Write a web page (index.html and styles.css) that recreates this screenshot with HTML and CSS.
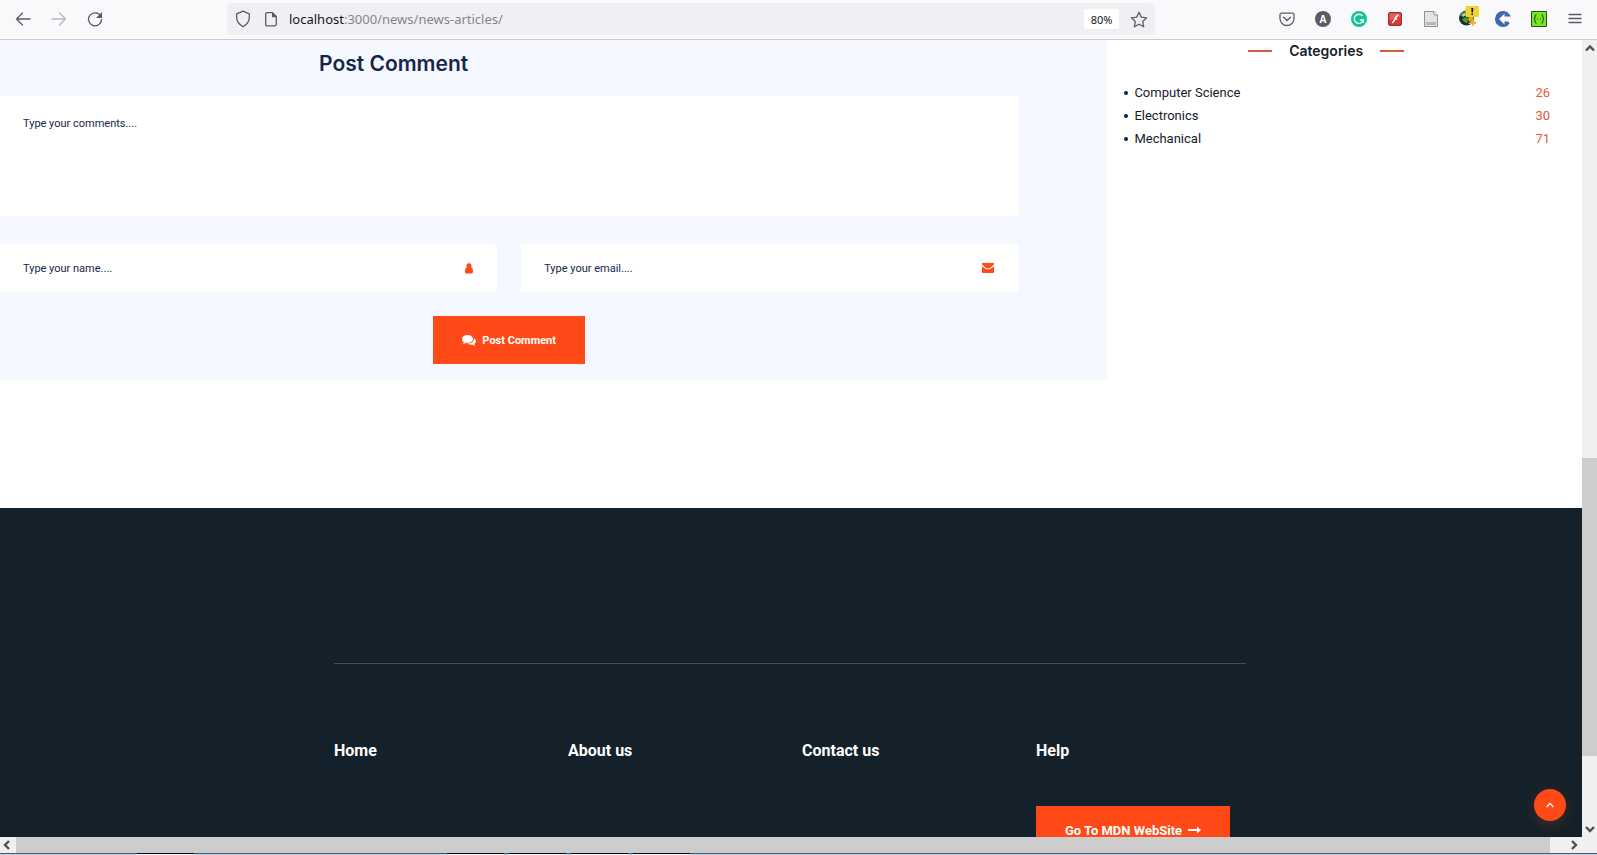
FILE: index.html
```html
<!DOCTYPE html>
<html lang="en">
<head>
<meta charset="utf-8">
<title>News articles</title>
<link rel="stylesheet" href="styles.css">
</head>
<body>
<header class="toolbar">
  <nav class="tools" aria-label="Navigation">
    <button class="tool" aria-label="Back"><svg width="16" height="16" viewBox="0 0 16 16"><path d="M15 8H1.500M7.500 2l-6 6 6 6" class="line"/></svg></button>
    <button class="tool faded" aria-label="Forward"><svg width="16" height="16" viewBox="0 0 16 16"><path d="M1 8h13.500M8.500 2l6 6-6 6" class="line"/></svg></button>
    <button class="tool" aria-label="Reload"><svg width="16" height="16" viewBox="0 0 16 16"><path d="M13.600 5A6.500 6.500 0 1 0 14.500 8.500" class="line"/><path d="M15 1v6H9z" fill="#5b5b66"/></svg></button>
  </nav>
  <div class="urlbar">
    <svg width="16" height="18" viewBox="0 0 16 18"><path d="M8 1.200 14.300 3.800v3.700c0 4.500-2.800 7.300-6.300 9.300-3.500-2-6.300-4.800-6.300-9.300V3.800z" class="line"/></svg>
    <svg class="page-icon" width="12" height="16" viewBox="0 0 12 16"><path d="M2 1.700h5.500l3.800 3.800v7.800a1.500 1.500 0 0 1-1.500 1.500H2A1.300 1.300 0 0 1 .700 13.500V3A1.300 1.300 0 0 1 2 1.700z" class="line"/><path d="M7 1.200v5h5z" fill="#5b5b66"/></svg>
    <span class="address"><b>localhost</b>:3000/news/news-articles/</span>
    <button class="zoom">80%</button>
    <button class="star" aria-label="Bookmark"><svg width="18" height="17" viewBox="0 0 18 17"><path d="m9 1.200 2.300 4.900 5.300.7-3.900 3.700 1 5.300L9 13.200l-4.700 2.600 1-5.300L1.400 6.800l5.300-.7z" class="line"/></svg></button>
  </div>
  <div class="tools">
    <button class="tool" aria-label="Pocket"><svg width="16" height="16" viewBox="0 0 16 16"><path d="M2.500 2.200h11a1.500 1.500 0 0 1 1.500 1.500v3.800a7 7 0 0 1-14 0V3.700a1.500 1.500 0 0 1 1.500-1.500zM4.500 6.200 8 9.500l3.500-3.300" class="line"/></svg></button>
    <button class="tool" aria-label="Account"><span class="account">A</span></button>
    <button class="tool" aria-label="Grammar"><svg width="16" height="16" viewBox="0 0 16 16"><circle cx="8" cy="8" r="8" fill="#15c39a"/><path d="M11.500 4.900A4.600 4.600 0 1 0 12.400 9H8.800M12.400 9v2.800" fill="none" stroke="#fff" stroke-width="1.300"/></svg></button>
    <button class="tool" aria-label="Flash"><svg width="14" height="14" viewBox="0 0 14 14"><rect x=".500" y=".500" width="13" height="13" rx="1.500" fill="#d9372f" stroke="#98302d"/><path d="M1.500 1.500h11v4c-4 0-7 1-11 3z" fill="#ed7068" opacity=".7"/><path d="M10.500 3.200C7 3 7.500 9.500 4 10.700M6 7h3.200" fill="none" stroke="#fff" stroke-width="1.500"/></svg></button>
    <button class="tool" aria-label="Reader"><svg width="14" height="16" viewBox="0 0 14 16"><path d="M.500.500H10l3.500 3.500v11.500H.500z" fill="#e4e4e6" stroke="#929294"/><path d="M10 .500V4h3.500" fill="#fff" stroke="#929294"/><path d="M2.500 11.500h9v2h-9z" fill="#bbb" stroke="#999" stroke-width=".500"/></svg></button>
    <button class="tool" aria-label="Download manager"><svg class="globe" width="20" height="21" viewBox="0 0 20 21"><circle cx="7.500" cy="12" r="7.500" fill="#15332c"/><path d="M1 9c1-3 4-4 6-3.500L6 8 3 10.500zM3 13l4-2 3 2-2 4-3-1z" fill="#4f9b2e"/><path d="M3 9l3-2 1 2-3 2z" fill="#a9d8d6"/><path d="M9 12l3-2 2-.5.500 3.500-4 3z" fill="#e4ac25"/><path d="m9 18 5-5 1.500 2.500L18 17l-2.500 1L14 20.500 12.500 18z" fill="#eeb52c"/><rect x="6.500" width="13.500" height="11" rx="1.500" fill="#f0d22c"/><path d="M12.300 2h2l-.300 4.500h-1.400zM12.400 7.500H14V9h-1.600z" fill="#111"/></svg></button>
    <button class="tool" aria-label="Cloud"><svg width="16" height="16" viewBox="0 0 16 16"><path d="M14.600 3.500A8 8 0 1 0 14.600 12.500L13 10.500H9.500V13.500L4 8 9.500 2.500V5.500H16z" fill="#4267b2"/></svg></button>
    <button class="tool" aria-label="JSON"><svg width="16" height="16" viewBox="0 0 16 16"><path d="M.500.500h15v15H.500z" fill="#7ce522" stroke="#235527"/><path d="M5.500 3.500C3.200 3.500 5 7.500 3 8c2 .5.200 4.500 2.500 4.500M10.500 3.500C12.800 3.500 11 7.500 13 8c-2 .5-.2 4.500-2.500 4.500" fill="none" stroke="#235527" stroke-width="1.200"/><path d="M6 8h1M9 8h1" stroke="#235527"/></svg></button>
    <button class="tool" aria-label="Menu"><svg width="14" height="12" viewBox="0 0 14 12"><path d="M1 1.500h12M1 5.500h12M1 9.500h12" class="line"/></svg></button>
  </div>
</header>

<div class="window">
  <div class="viewport">
    <main class="content">
      <section class="comment">
        <h2>Post Comment</h2>
        <form class="form">
          <textarea aria-label="Comment" placeholder="Type your comments...."></textarea>
          <div class="pair">
            <label class="field"><input type="text" aria-label="Name" placeholder="Type your name...."><svg width="8" height="11" viewBox="0 0 8 11"><path d="M1.800 4.600C.500 5 0 6.500 0 8.500 0 10 .7 10.500 1.700 10.500h4.600C7.300 10.500 8 10 8 8.500c0-2-.5-3.500-1.800-3.900C7.200 2.500 6.200.200 4 .200S.8 2.500 1.800 4.600z" fill="#ff4a17"/></svg></label>
            <label class="field"><input type="email" aria-label="Email" placeholder="Type your email...."><svg width="12" height="10" viewBox="0 0 12 10"><path d="M1 0h10a1 1 0 0 1 1 1.300C10.500 3.500 7.500 5.500 6 5.500S1.500 3.500 0 1.300A1 1 0 0 1 1 0z" fill="#ff4a17"/><path d="M0 3c2 2 4.500 3.600 6 3.600S10 5 12 3v6a1 1 0 0 1-1 1H1a1 1 0 0 1-1-1z" fill="#ff4a17"/></svg></label>
          </div>
          <button class="action small" type="button"><svg width="14" height="11" viewBox="0 0 14 11"><path d="M5.500 0C2.500 0 0 1.700 0 4c0 1.300.7 2.300 1.900 3L1 9c1.200-.1 2.200-.6 3-1.200C8 8.300 11 6.500 11 4S8.500 0 5.500 0z" fill="#fff"/><path d="M12 3.200C13.300 4 14 5 14 6.100c0 1.200-.6 2.100-1.700 2.800l.7 1.800c-1.200-.1-2-.5-2.800-1.100-2 .2-3.800-.2-5-1.100C9 8.600 12 6.700 12 3.200z" fill="#fff"/></svg>Post Comment</button>
        </form>
      </section>
      <aside class="sidebar">
        <h3>Categories</h3>
        <ul>
          <li><a href="#">Computer Science</a><span>26</span></li>
          <li><a href="#">Electronics</a><span>30</span></li>
          <li><a href="#">Mechanical</a><span>71</span></li>
        </ul>
      </aside>
    </main>
    <footer class="footer">
      <div class="columns">
        <h4>Home</h4>
        <h4>About us</h4>
        <h4>Contact us</h4>
        <div>
          <h4>Help</h4>
          <a class="action" href="#">Go To MDN WebSite<svg width="13" height="8" viewBox="0 0 13 8"><path d="M0 3h9V.700L13 4 9 7.300V5H0z" fill="#fff"/></svg></a>
        </div>
      </div>
    </footer>
    <button class="to-top" aria-label="Back to top"><svg width="8" height="6" viewBox="0 0 8 6"><path d="m.500 5 3.500-3.500L7.500 5" fill="none" stroke="#fff" stroke-width="1.400"/></svg></button>
  </div>
  <div class="vscroll">
    <svg width="10" height="16" viewBox="0 0 10 16"><path d="m1 10.500 4-4 4 4" class="arrow"/></svg>
    <div class="vtrack"><div class="vthumb"></div></div>
    <svg width="10" height="16" viewBox="0 0 10 16"><path d="m1 6 4 4 4-4" class="arrow"/></svg>
  </div>
</div>
<div class="hscroll">
  <svg width="16" height="16" viewBox="0 0 16 16"><path d="m9 4-4 4 4 4" class="arrow"/></svg>
  <div class="hthumb"></div>
  <svg width="16" height="16" viewBox="0 0 16 16"><path d="m6 4 4 4-4 4" class="arrow"/></svg>
</div>
<div class="taskbar"><i></i><i class="group"></i><i></i><i></i><i></i></div>
</body>
</html>
```

FILE: styles.css
```css
* { box-sizing: border-box; }
body {
  margin: 0;
  height: 100vh;
  display: flex;
  flex-direction: column;
  overflow: hidden;
  background: #fff;
  font-family: Roboto, "Liberation Sans", sans-serif;
  color: #14212b;
}
button { border: 0; padding: 0; background: none; font: inherit; color: inherit; }
a { color: inherit; text-decoration: none; }
h2, h3, h4, ul { margin: 0; padding: 0; }
svg { display: block; flex: none; }
.line { fill: none; stroke: #5b5b66; stroke-width: 1.3; stroke-linejoin: round; stroke-linecap: round; }
.arrow { fill: none; stroke: #505050; stroke-width: 2.4; }

/* Browser toolbar */
.toolbar {
  flex: none;
  display: flex;
  align-items: center;
  height: 40px;
  padding: 0 4px 1px 5px;
  background: #f9f9fb;
  border-bottom: 1px solid #ccccd0;
}
.tools { display: flex; }
.tool { width: 36px; height: 32px; display: flex; align-items: center; justify-content: center; }
.faded { opacity: .4; }
.urlbar {
  flex: 1;
  display: flex;
  align-items: center;
  height: 32px;
  margin: 0 114px;
  padding: 0 7px 0 8px;
  border-radius: 4px;
  background: #f0f0f4;
}
.page-icon { margin-left: 14px; }
.address { flex: 1; margin-left: 12px; font: 13px/20px "Noto Sans", sans-serif; color: #85858c; }
.address b { font-weight: 400; color: #15141a; }
.zoom {
  width: 35px;
  height: 20px;
  margin-right: 11px;
  border-radius: 3px;
  background: #fff;
  font: 11px "Noto Sans", sans-serif;
  color: #15141a;
}
.account {
  width: 16px;
  height: 16px;
  border-radius: 50%;
  background: #5b5b66;
  color: #fff;
  font: bold 10px/16px "Open Sans", sans-serif;
}
.globe { margin-bottom: 5px; margin-left: 3px; }

/* Page */
.window { flex: 1; min-height: 0; display: flex; }
.viewport { flex: 1; position: relative; display: flex; flex-direction: column; overflow: hidden; }
.content { flex: none; display: flex; align-items: flex-start; padding-bottom: 128px; }
.comment { width: 70%; padding: 8px 89px 16px 0; background: #f5f8fe; }
.comment h2 {
  padding-left: 319px;
  margin-bottom: 16px;
  font: 600 21px/32px Inter, sans-serif;
  color: #172648;
}
.form { display: flex; flex-direction: column; }
.form textarea, .field {
  border: 0;
  background: #fff;
}
.form textarea { height: 120px; padding: 20px 23px; resize: none; }
.form textarea, .field input { display: block; outline: 0; font: 11px/16px Roboto, sans-serif; color: #172648; }
::placeholder { color: #172648; opacity: 1; }
.pair { display: grid; grid-template-columns: 1fr 1fr; gap: 24px; margin: 28px 0 24px; }
.field { display: flex; align-items: center; height: 48px; padding: 0 24px 0 23px; }
.field input { flex: 1; min-width: 0; border: 0; padding: 2px 0 0; background: none; }
.action {
  display: flex;
  align-items: center;
  justify-content: center;
  gap: 6px;
  height: 48px;
  background: #ff4a17;
  color: #fff;
  font-weight: 700;
  font-size: 13px;
}
.small { align-self: center; width: 152px; font-size: 11px; }

.sidebar { flex: 1; padding-right: 32px; }
.sidebar h3 {
  display: flex;
  align-items: center;
  justify-content: center;
  gap: 17px;
  margin: 0 5px 20px 0;
  font: 600 14px/22px Inter, sans-serif;
}
.sidebar h3::before, .sidebar h3::after { content: ""; width: 24px; height: 2px; background: #d25c3d; }
.sidebar ul { display: grid; gap: 1px; list-style: none; padding-left: 17px; font-size: 13px; line-height: 22px; }
.sidebar li { display: flex; align-items: center; }
.sidebar li::before { content: ""; width: 4px; height: 4px; margin-right: 6px; border-radius: 50%; background: #14212b; }
.sidebar li a { flex: 1; }
.sidebar li span { color: #e05a38; }

.footer { flex: 1; min-height: 0; padding: 155px 2px 0 0; background: #15212a; color: #fff; }
.columns {
  display: grid;
  grid-template-columns: repeat(4, 1fr);
  gap: 24px;
  max-width: 912px;
  margin: 0 auto;
  padding-top: 75px;
  border-top: 1px solid #414f57;
}
.columns h4 { font-size: 16px; line-height: 24px; }
.columns .action { margin: 43px 16px 0 0; }
.to-top {
  position: absolute;
  right: 16px;
  bottom: 16px;
  width: 32px;
  height: 32px;
  border-radius: 50%;
  background: #ff4a17;
  box-shadow: 0 4px 12px rgba(255, 74, 23, .2);
}
.to-top svg { margin: 0 auto; }

/* Scroll bars */
.vscroll { width: 15px; display: flex; flex-direction: column; align-items: center; background: #f0f0f0; }
.vtrack { flex: 1; align-self: stretch; padding-top: 402px; }
.vthumb { height: 298px; background: #cdcdcd; }
.hscroll { flex: none; display: flex; height: 16px; padding-right: 15px; background: #f0f0f0; }
.hthumb { flex: 1; margin-right: 16px; background: #cdcdcd; }

.taskbar {
  flex: none;
  display: flex;
  gap: 5px;
  height: 2px;
  padding-left: 137px;
  border-top: 1px solid #40587b;
  background: #c2d3e6;
}
.taskbar i { width: 57px; height: 2px; margin-top: -1px; border-top: 1px solid #080810; background: #f5f5fa; }
.taskbar .group { margin-left: 248px; }
```
